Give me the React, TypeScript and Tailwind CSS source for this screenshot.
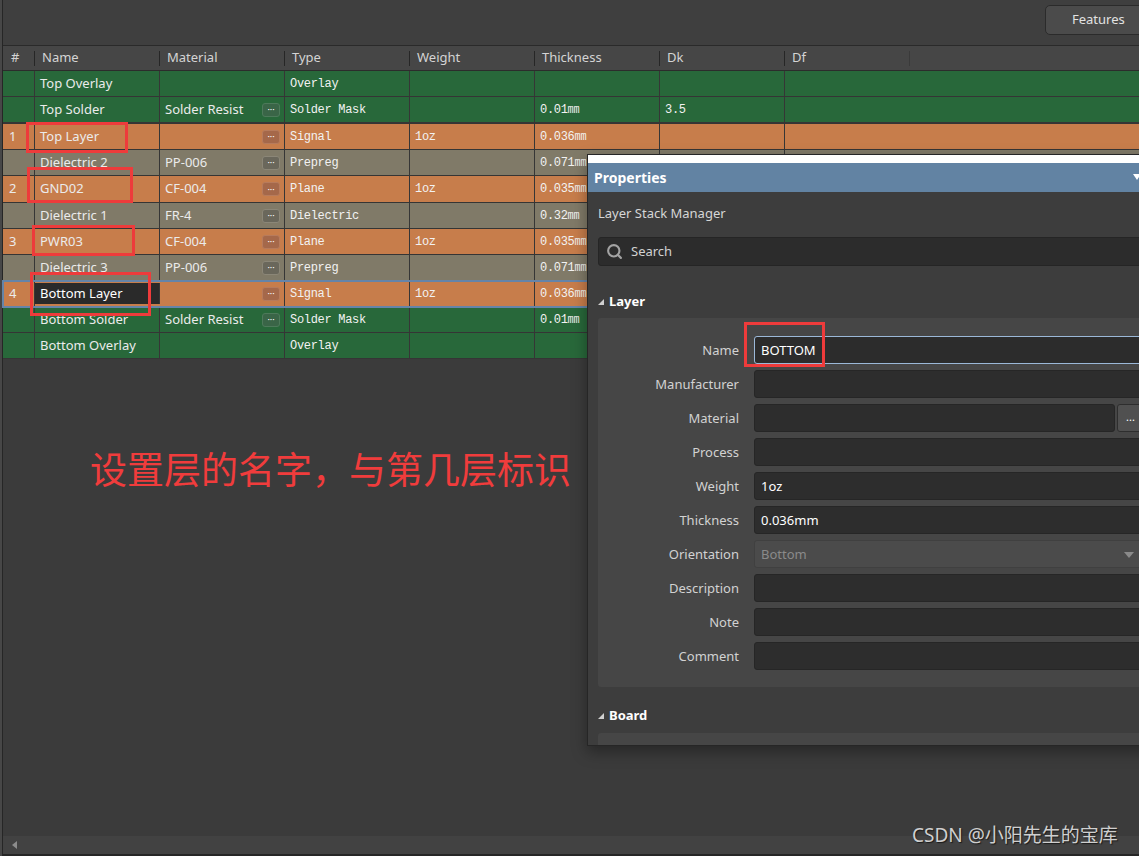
import { Search } from 'lucide-react';

type Kind = 'g' | 'o' | 'd';

type Row = {
  n: string;
  name: string;
  mat: string;
  dots: boolean;
  type: string;
  w: string;
  t: string;
  dk: string;
  kind: Kind;
  h: string;
  sel?: boolean;
  thick?: boolean;
};

const rows: Row[] = [
  { n: '', name: 'Top Overlay', mat: '', dots: false, type: 'Overlay', w: '', t: '', dk: '', kind: 'g', h: 'h-[26px]' },
  { n: '', name: 'Top Solder', mat: 'Solder Resist', dots: true, type: 'Solder Mask', w: '', t: '0.01㎜', dk: '3.5', kind: 'g', h: 'h-[27px]', thick: true },
  { n: '1', name: 'Top Layer', mat: '', dots: true, type: 'Signal', w: '1oz', t: '0.036㎜', dk: '', kind: 'o', h: 'h-[26px]' },
  { n: '', name: 'Dielectric 2', mat: 'PP-006', dots: true, type: 'Prepreg', w: '', t: '0.071㎜', dk: '', kind: 'd', h: 'h-[26px]' },
  { n: '2', name: 'GND02', mat: 'CF-004', dots: true, type: 'Plane', w: '1oz', t: '0.035㎜', dk: '', kind: 'o', h: 'h-[27px]' },
  { n: '', name: 'Dielectric 1', mat: 'FR-4', dots: true, type: 'Dielectric', w: '', t: '0.32㎜', dk: '', kind: 'd', h: 'h-[26px]' },
  { n: '3', name: 'PWR03', mat: 'CF-004', dots: true, type: 'Plane', w: '1oz', t: '0.035㎜', dk: '', kind: 'o', h: 'h-[26px]' },
  { n: '', name: 'Dielectric 3', mat: 'PP-006', dots: true, type: 'Prepreg', w: '', t: '0.071㎜', dk: '', kind: 'd', h: 'h-[26px]' },
  { n: '4', name: 'Bottom Layer', mat: '', dots: true, type: 'Signal', w: '1oz', t: '0.036㎜', dk: '', kind: 'o', h: 'h-[26px]', sel: true },
  { n: '', name: 'Bottom Solder', mat: 'Solder Resist', dots: true, type: 'Solder Mask', w: '', t: '0.01㎜', dk: '', kind: 'g', h: 'h-[26px]' },
  { n: '', name: 'Bottom Overlay', mat: '', dots: false, type: 'Overlay', w: '', t: '', dk: '', kind: 'g', h: 'h-[26px]' },
];

const rowBg: Record<Kind, string> = {
  g: 'bg-[#28683a]',
  o: 'bg-[#c77d4b]',
  d: 'bg-[#807a68]',
};

const dotCls: Record<Kind, string> = {
  g: 'bg-[#3a6547] border-[#4d7a5a]',
  o: 'bg-[#a5684a] border-[#b77b5c]',
  d: 'bg-[#6a675b] border-[#8b8677]',
};

const headers = ['Name', 'Material', 'Type', 'Weight', 'Thickness', 'Dk', 'Df'];

const fields = [
  { label: 'Name', value: 'BOTTOM', focus: true },
  { label: 'Manufacturer', value: '' },
  { label: 'Material', value: '', more: true },
  { label: 'Process', value: '' },
  { label: 'Weight', value: '1oz' },
  { label: 'Thickness', value: '0.036mm' },
  { label: 'Orientation', value: 'Bottom', disabled: true },
  { label: 'Description', value: '' },
  { label: 'Note', value: '' },
  { label: 'Comment', value: '' },
];

const mono = "font-['Liberation_Mono','Noto_Sans_CJK_SC',monospace] text-[12px] tracking-[-0.3px] text-[#f2f2f2]";

function Heading({ title, className }: { title: string; className: string }) {
  return (
    <div className={`flex items-center gap-[5px] h-[18px] ${className}`}>
      <svg width="6" height="6" viewBox="0 0 6 6">
        <polygon points="6,0 6,6 0,6" fill="#d0d0d0" />
      </svg>
      <span className="text-[13px] font-bold text-white">{title}</span>
    </div>
  );
}

export default function App() {
  return (
    <div className="relative w-[1139px] h-[856px] overflow-hidden bg-[#3b3b3b] font-['Noto_Sans',sans-serif] flex">
      <div className="w-[2px] bg-[#474747] shrink-0" />
      <div className="flex-1 flex flex-col border-l border-[#262626] min-w-0">
        {/* toolbar */}
        <div className="h-[46px] shrink-0 bg-[#3f3f3f] border-b border-[#2a2a2a] flex justify-end items-start pt-[5px]">
          <button className="w-[105px] h-[30px] -mr-[11px] rounded-[5px] bg-[#4b4b4b] border border-[#2b2b2b] text-[13px] text-[#e2e2e2] text-left pl-[26px]">
            Features
          </button>
        </div>

        {/* column headers */}
        <div className="h-[25px] shrink-0 bg-[#464646] border-b border-[#2c2c2c] flex items-center text-[13px] text-[#d4d4d4]">
          <div className="w-[31px] pl-[8px]">#</div>
          {headers.map(h => (
            <div key={h} className="w-[125px] flex items-center">
              <span className="w-px h-[15px] bg-[#262626]" />
              <span className="pl-[7px]">{h}</span>
            </div>
          ))}
          <span className="w-px h-[15px] bg-[#3a3a3a]" />
        </div>

        {/* layer rows */}
        <div className="shrink-0">
          {rows.map(r => (
            <div
              key={r.name}
              className={`flex ${r.h} text-[13px] text-[#ebebeb] border-[#353535] ${rowBg[r.kind]} ${r.thick ? 'border-b-2' : 'border-b'} ${r.sel ? 'relative outline-2 outline-[#6584a8] -outline-offset-1' : ''}`}
            >
              <div className="w-[32px] h-full flex items-center pl-[6px] border-r border-[#363636]">{r.n}</div>
              <div className={`w-[125px] flex items-center pl-[5px] border-r border-[#363636] ${r.sel ? 'bg-[#2a2a2a] text-white my-[2px] h-[21px]' : 'h-full'}`}>
                {r.name}
              </div>
              <div className="w-[125px] h-full flex items-center justify-between pl-[5px] pr-[4px] border-r border-[#363636]">
                <span>{r.mat}</span>
                {r.dots && (
                  <span className={`w-[18px] h-[14px] rounded-[3px] border flex items-center justify-center text-[9px] leading-none text-white ${dotCls[r.kind]}`}>
                    ···
                  </span>
                )}
              </div>
              <div className={`w-[125px] h-full flex items-center pl-[5px] border-r border-[#363636] ${mono}`}>{r.type}</div>
              <div className={`w-[125px] h-full flex items-center pl-[5px] border-r border-[#363636] ${mono}`}>{r.w}</div>
              <div className={`w-[125px] h-full flex items-center pl-[5px] border-r border-[#363636] ${mono}`}>{r.t}</div>
              <div className={`w-[125px] h-full flex items-center pl-[5px] border-r border-[#363636] ${mono}`}>{r.dk}</div>
              <div className="flex-1 h-full" />
            </div>
          ))}
        </div>

        <div className="flex-1" />

        {/* horizontal scrollbar */}
        <div className="h-[18px] shrink-0 bg-[#424242] flex items-center pl-[9px]">
          <svg width="5" height="8" viewBox="0 0 5 8">
            <polygon points="5,0 5,8 0,4" fill="#8c8c8c" />
          </svg>
        </div>
        <div className="h-[2px] shrink-0 bg-[#262626]" />
      </div>

      {/* Properties panel */}
      <div className="absolute left-[587px] top-[154px] w-[600px] h-[592px] overflow-hidden bg-[#3d3d3d] border border-[#262626] shadow-[0_6px_14px_rgba(0,0,0,0.35)] flex flex-col">
        <div className="h-[8px] bg-white shrink-0" />
        <div className="relative h-[29px] shrink-0 bg-[#6283a3] flex items-center pl-[6px]">
          <span className="text-[14px] font-bold text-white">Properties</span>
          <svg className="absolute left-[545px] top-[11px]" width="8" height="6" viewBox="0 0 8 6">
            <polygon points="0,0 8,0 4,6" fill="#ffffff" />
          </svg>
        </div>
        <div className="pl-[10px] flex flex-col">
          <div className="mt-[12px] h-[18px] leading-[18px] text-[13px] text-[#d6d6d6]">Layer Stack Manager</div>
          <div className="mt-[15px] w-[560px] h-[29px] bg-[#2c2c2c] border border-[#252525] rounded-[3px] flex items-center pl-[7px] gap-[8px]">
            <Search size={17} strokeWidth={3} className="text-[#a3a3a3]" />
            <span className="text-[13px] text-[#d2d2d2]">Search</span>
          </div>

          <Heading title="Layer" className="mt-[27px]" />
          <div className="mt-[7px] w-[560px] pr-[15px] bg-[#464646] rounded-[3px] pt-[18px] pb-[17px] flex flex-col gap-[6px]">
            {fields.map(f => (
              <div key={f.label} className="flex items-center gap-[15px] h-[28px]">
                <div className="w-[141px] text-right text-[13px] text-[#d2d2d2] pt-[2px]">{f.label}</div>
                <div className="flex-1 flex gap-[2px] h-full">
                  <div
                    className={`flex-1 h-full rounded-[3px] border flex items-center justify-between pl-[6px] pr-[8px] pt-[1px] text-[13px] ${
                      f.focus
                        ? 'bg-[#2c2c2c] border-[#9bb8d8] text-white'
                        : f.disabled
                        ? 'bg-[#4b4b4b] border-[#404040] text-[#8a8a8a]'
                        : 'bg-[#2d2d2d] border-[#262626] text-white'
                    }`}
                  >
                    <span>{f.value}</span>
                    {f.disabled && (
                      <svg width="10" height="6" viewBox="0 0 10 6">
                        <polygon points="0,0 10,0 5,6" fill="#8a8a8a" />
                      </svg>
                    )}
                  </div>
                  {f.more && (
                    <div className="w-[26px] h-full rounded-[3px] bg-[#505050] border border-[#2e2e2e] text-[11px] text-white flex items-start justify-center pl-[1px] pt-[6px] leading-none">
                      ...
                    </div>
                  )}
                </div>
              </div>
            ))}
          </div>

          <Heading title="Board" className="mt-[20px]" />
          <div className="mt-[8px] w-[560px] h-[40px] bg-[#464646] rounded-[3px]" />
        </div>
      </div>

      {/* annotation */}
      <div className="absolute left-[90px] top-[450px] text-[37px] leading-none text-[#f03c3c] font-['Noto_Sans_CJK_SC',sans-serif] whitespace-nowrap">
        设置层的名字，与第几层标识
      </div>
      <div className="absolute left-[26px] top-[122px] w-[102px] h-[31px] border-[3px] border-[#ee3b3b]" />
      <div className="absolute left-[27px] top-[167px] w-[106px] h-[36px] border-[3px] border-[#ee3b3b]" />
      <div className="absolute left-[32px] top-[225px] w-[103px] h-[31px] border-[3px] border-[#ee3b3b]" />
      <div className="absolute left-[30px] top-[272px] w-[121px] h-[44px] border-[3px] border-[#ee3b3b]" />
      <div className="absolute left-[744px] top-[322px] w-[81px] h-[45px] border-[3px] border-[#ee3b3b]" />

      {/* watermark */}
      <div className="absolute left-[912px] top-[826px] text-[19px] leading-none text-[#cfcfcf] font-['Noto_Sans','Noto_Sans_CJK_SC',sans-serif] whitespace-nowrap [text-shadow:1px_1px_1px_#1a1a1a]">
        CSDN @小阳先生的宝库
      </div>
    </div>
  );
}
